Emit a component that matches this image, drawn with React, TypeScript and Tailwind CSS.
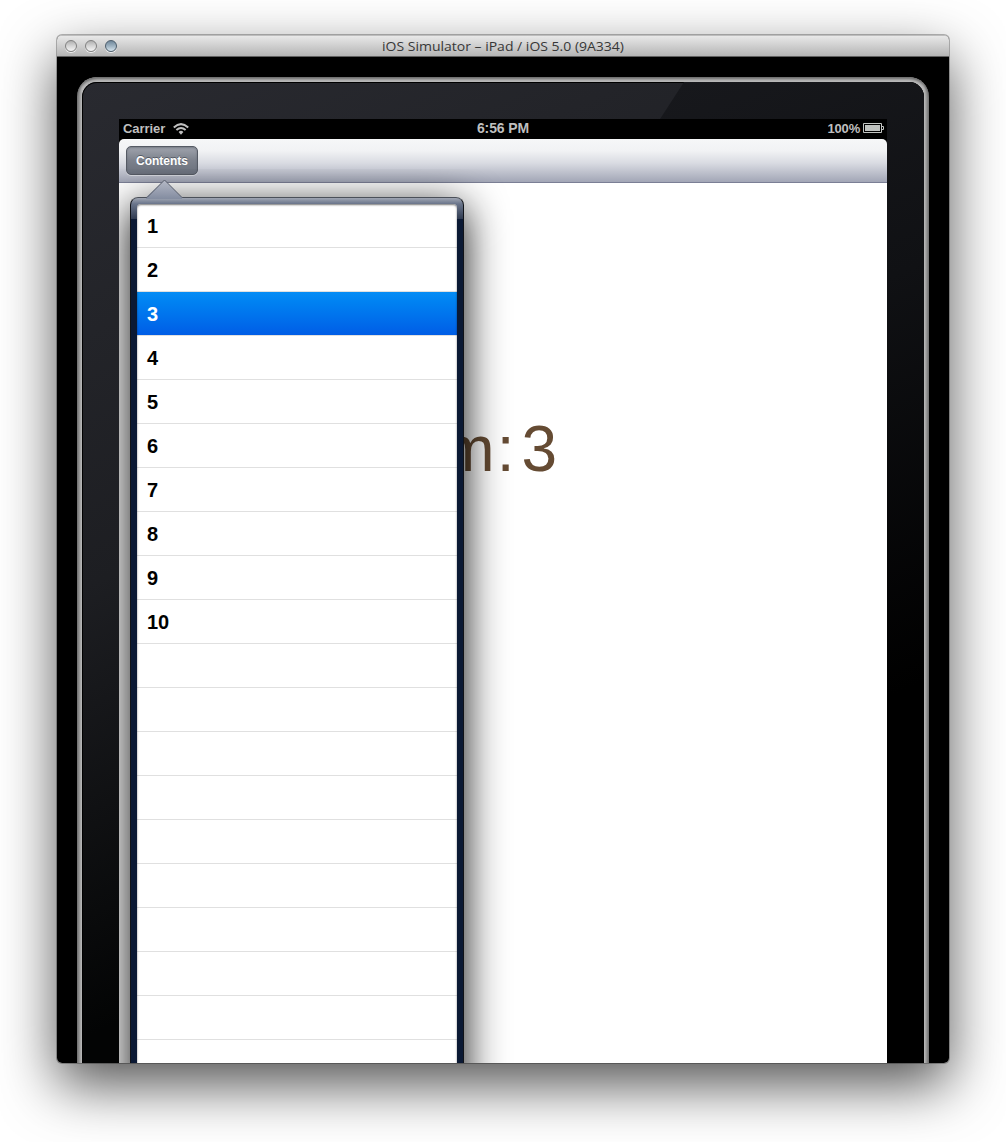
const contents = ["1", "2", "3", "4", "5", "6", "7", "8", "9", "10", "", "", "", "", "", "", "", "", "", ""];

function TitleBar() {
  return (
    <header className="relative flex h-[22px] shrink-0 items-center justify-center rounded-t-[4px] border-b border-[#606060] bg-linear-to-b from-[#ebebeb] to-[#b5b5b5] shadow-[inset_0_1px_0_#bdbdbd]">
      <div className="absolute left-[8px] top-[5px] flex gap-[8px]">
        <span className="size-3 rounded-full border border-[#808080] bg-linear-to-b from-[#b0b0b0] via-[#d6d6d6] to-[#f5f5f5] shadow-[0_1px_0_#eee]" />
        <span className="size-3 rounded-full border border-[#808080] bg-linear-to-b from-[#b0b0b0] via-[#d6d6d6] to-[#f5f5f5] shadow-[0_1px_0_#eee]" />
        <span className="size-3 rounded-full border border-[#4c5d6b] bg-linear-to-b from-[#70889b] via-[#9eb2c1] to-[#d6e5ee] shadow-[0_1px_0_#eee]" />
      </div>
      <svg width="244" height="20" className="overflow-visible">
        <text x="1" y="15" textLength="242" lengthAdjust="spacingAndGlyphs" fontFamily="'Open Sans', sans-serif" fontSize="13" fill="#373737">iOS Simulator – iPad / iOS 5.0 (9A334)</text>
      </svg>
    </header>
  );
}

function StatusBar() {
  return (
    <div className="relative flex h-5 items-center justify-between bg-black pl-[4px] pr-[3px] text-[13px] font-bold text-[#bfbfbf]">
      <div className="flex items-center gap-[8px]">
        <span className="w-[42px] whitespace-nowrap tracking-[-0.05px]">Carrier</span>
        <svg width="16" height="12" viewBox="0 0 16 12" fill="none" stroke="#bfbfbf" strokeWidth="2">
          <path d="M.8 4.4Q8-2.1 15.2 4.4M3.4 7Q8 2.9 12.6 7" />
          <path d="M5.6 9Q8 6.6 10.4 9L8 11.7Z" fill="#bfbfbf" stroke="none" />
        </svg>
      </div>
      <span className="absolute left-1/2 top-[-1px] -translate-x-1/2 whitespace-nowrap text-[14px] tracking-[-0.1px]">6:56 PM</span>
      <div className="flex items-center gap-[3px]">
        <span className="tracking-[-0.2px]">100%</span>
        <svg className="-mt-[2px]" width="21" height="10" viewBox="0 0 21 10">
          <path d="M.5.5h18v9H.5zM18.5 3.5h2v3h-2" fill="none" stroke="#c2c5c2" />
          <path d="M2 2h15v6H2z" fill="#bfc2bf" />
        </svg>
      </div>
    </div>
  );
}

function Toolbar() {
  return (
    <div className="bg-black">
      <div className="flex h-[44px] items-start rounded-t-[5px] border-b border-[#7b7f95] bg-[linear-gradient(#f6f7f8_0,#f1f2f4_12px,#d9dbe2_24px,#a2a6b6_43px)] pl-[7px] pt-[7px]">
        <button className="h-[29px] w-[72px] rounded-[5px] border border-[#555a64] bg-linear-to-b from-[#a0a4ad] via-[#7c818c] to-[#6a707c] text-[12px] font-bold text-white shadow-[inset_0_1px_2px_#555a6488,0_1px_0_#ffffff70] [text-shadow:0_-1px_0_#555a64]">
          Contents
        </button>
      </div>
    </div>
  );
}

function Popover() {
  return (
    <div className="absolute left-[11px] top-[14px] h-[920px] w-[334px] rounded-t-[8px] shadow-[0_10px_42px_rgba(0,0,0,0.95)]">
      <div className="h-full overflow-hidden rounded-t-[8px] border-x border-t border-[#111318] border-t-[#4b5059] bg-[linear-gradient(#a0a6b3_0,#69748a_6px,#303b51_21px,#0b1934_21px)] px-[6px] pt-[6px]">
        <div className="relative h-full overflow-hidden rounded-t-[4px] bg-white">
          <ul className="text-[20px] font-bold leading-[45px]">
            {contents.map((label, index) => (
              <li
                key={index}
                className={label === "3" ? "h-[44px] border-b border-[#e0e0e0] bg-linear-to-b from-[#058cf5] to-[#015de6] pl-[10px] text-white" : "h-[44px] border-b border-[#e0e0e0] pl-[10px]"}
              >
                {label}
              </li>
            ))}
          </ul>
          <div className="pointer-events-none absolute inset-0 rounded-t-[4px] shadow-[inset_0_1px_2px_#0008]" />
        </div>
      </div>
      <svg className="absolute left-[15px] top-[-18px]" width="38" height="20" viewBox="0 0 38 20">
        <defs>
          <linearGradient id="arrow" x2="0" y2="1">
            <stop stopColor="#b6bac7" />
            <stop offset="1" stopColor="#838ca0" />
          </linearGradient>
        </defs>
        <path d="M1 20v-1.5L19.5 1 37 18.5V20" fill="url(#arrow)" />
        <path d="M1 18.5h1L19.5 1 37 18.5h1" fill="none" stroke="#555b68" />
      </svg>
    </div>
  );
}

function Screen() {
  return (
    <main className="relative h-[944px] w-[768px] overflow-hidden bg-white">
      <StatusBar />
      <Toolbar />
      <div className="relative h-[880px]">
        <div className="flex w-[438px] items-baseline justify-end whitespace-nowrap pt-[229px] text-[64px] leading-[74px] text-[#654b33]">
          <span>Item</span>
          <span className="ml-[2px]">:</span>
          <span className="ml-[7px]">3</span>
        </div>
        <div className="absolute inset-x-0 -top-[14px] bottom-0 overflow-hidden pt-[14px]">
          <div className="relative">
            <Popover />
          </div>
        </div>
      </div>
    </main>
  );
}

export default function App() {
  return (
    <div className="h-[1142px] w-[1006px] overflow-hidden bg-white px-[57px] pt-[35px] font-['Liberation_Sans',sans-serif]">
      <div className="w-[892px] rounded-[5px] shadow-[0_0_0_1px_#0004,0_22px_56px_rgba(0,0,0,0.68)]">
        <div className="flex h-[1028px] flex-col overflow-hidden rounded-[5px] bg-black">
          <TitleBar />
          <div className="min-h-0 flex-1 px-[20px] pt-[20px]">
            <div className="h-[1020px] rounded-t-[20px] bg-[linear-gradient(90deg,#777,#bbb_5px,#bbb_847px,#777_852px)] p-[5px] shadow-[inset_0_2px_3px_#666]">
              <div className="relative h-[1015px] overflow-hidden rounded-t-[15px] bg-[linear-gradient(155deg,#292a30,#1d1e22_36%,#030404_68%)] pl-[37px] pt-[37px] shadow-[inset_0_0_0_1px_#000]">
                <svg className="absolute right-0 top-0" width="264" height="1000" viewBox="0 0 264 1000">
                  <defs>
                    <linearGradient id="glass" gradientUnits="userSpaceOnUse" x1="20" y1="0" x2="264" y2="600">
                      <stop stopColor="#17181c" />
                      <stop offset=".4" stopColor="#101114" />
                      <stop offset="1" stopColor="#000" />
                    </linearGradient>
                  </defs>
                  <path d="M24 0H264V1000H180L-2 40Z" fill="url(#glass)" />
                </svg>
                <Screen />
              </div>
            </div>
          </div>
        </div>
      </div>
    </div>
  );
}
